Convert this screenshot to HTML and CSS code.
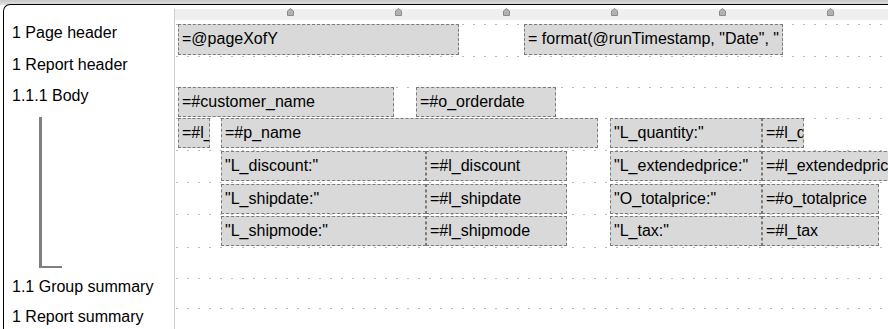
FILE: index.html
```html
<!DOCTYPE html>
<html>
<head>
<meta charset="utf-8">
<link rel="stylesheet" href="styles.css">
</head>
<body>
<div class="frame">
  <div class="gutter gutter-ruler"></div>
  <div class="ruler-cell">
    <div class="ruler">
      <svg class="marker" width="7" height="8" viewBox="0 0 7 8"><polygon points="3.5,0.5 6.5,3 6.5,7.5 0.5,7.5 0.5,3" /></svg>
      <svg class="marker" width="7" height="8" viewBox="0 0 7 8"><polygon points="3.5,0.5 6.5,3 6.5,7.5 0.5,7.5 0.5,3" /></svg>
      <svg class="marker" width="7" height="8" viewBox="0 0 7 8"><polygon points="3.5,0.5 6.5,3 6.5,7.5 0.5,7.5 0.5,3" /></svg>
      <svg class="marker" width="7" height="8" viewBox="0 0 7 8"><polygon points="3.5,0.5 6.5,3 6.5,7.5 0.5,7.5 0.5,3" /></svg>
      <svg class="marker" width="7" height="8" viewBox="0 0 7 8"><polygon points="3.5,0.5 6.5,3 6.5,7.5 0.5,7.5 0.5,3" /></svg>
      <svg class="marker" width="7" height="8" viewBox="0 0 7 8"><polygon points="3.5,0.5 6.5,3 6.5,7.5 0.5,7.5 0.5,3" /></svg>
    </div>
  </div>

  <div class="gutter label">1 Page header</div>
  <div class="band">
    <div class="field w-pagexofy ml-3">=@pageXofY</div>
    <div class="field w-format ml-65">= format(@runTimestamp, "Date", "</div>
  </div>

  <div class="gutter label">1 Report header</div>
  <div class="band"></div>

  <div class="gutter label body-label">
    <span>1.1.1 Body</span>
    <div class="bracket"></div>
  </div>
  <div class="band">
    <div class="field w-customer ml-3">=#customer_name</div>
    <div class="field w-orderdate ml-22">=#o_orderdate</div>
  </div>
  <div class="band">
    <div class="field w-l ml-3">=#l_</div>
    <div class="field w-pname ml-11">=#p_name</div>
    <div class="field w-lab2 ml-12">"L_quantity:"</div>
    <div class="field w-lq">=#l_q</div>
  </div>
  <div class="band off-1">
    <div class="field w-lab1 ml-46">"L_discount:"</div>
    <div class="field w-val1">=#l_discount</div>
    <div class="field w-lab2 ml-43">"L_extendedprice:"</div>
    <div class="field w-ext">=#l_extendedprice</div>
  </div>
  <div class="band off-2">
    <div class="field w-lab1 ml-46">"L_shipdate:"</div>
    <div class="field w-val1">=#l_shipdate</div>
    <div class="field w-lab2 ml-43">"O_totalprice:"</div>
    <div class="field w-val2">=#o_totalprice</div>
  </div>
  <div class="band off-2">
    <div class="field w-lab1 ml-46">"L_shipmode:"</div>
    <div class="field w-val1">=#l_shipmode</div>
    <div class="field w-lab2 ml-43">"L_tax:"</div>
    <div class="field w-val2">=#l_tax</div>
  </div>
  <div class="band"></div>

  <div class="gutter label">1.1 Group summary</div>
  <div class="band"></div>

  <div class="gutter label">1 Report summary</div>
  <div class="band"></div>
</div>
</body>
</html>
```

FILE: styles.css
```css
html {
  background: linear-gradient(#c9c9c9, #e2e2e2) 0 0 / 100% 5px no-repeat, #ffffff;
}
body {
  margin: 0;
  overflow: hidden;
  font-family: "Liberation Sans", Arial, sans-serif;
  font-size: 16px;
  color: #000;
}
.frame {
  margin: 4px 0 0 3px;
  border-top: 1px solid #000;
  border-left: 1px solid #000;
  border-top-left-radius: 7px;
  background: #fff;
  display: grid;
  grid-template-columns: 171px 1fr;
  grid-template-rows: 19px 32px 31px 31px 32px 32px 32px 33px 31px 30px 30px;
  height: 340px;
}
.gutter {
  border-right: 1px solid #cfcfcf;
}
.gutter-ruler {
  margin-top: 4px;
}
.label {
  padding-left: 8px;
  padding-top: 1px;
  line-height: 16px;
  white-space: nowrap;
}
.body-label {
  grid-row: span 6;
}
.body-label span {
  display: block;
}
.bracket {
  margin: 13px 0 0 27px;
  width: 20px;
  height: 149px;
  border-left: 3px solid #808080;
  border-bottom: 2px solid #808080;
}
.ruler-cell {
  padding-top: 3px;
}
.ruler {
  height: 11px;
  margin-top: 1px;
  background: #efefef;
  display: flex;
  gap: 101px;
  padding-left: 112px;
}
.marker {
  display: block;
  margin-top: -1px;
}
.marker polygon {
  fill: #b2b2b2;
  stroke: #8a8a8a;
  stroke-width: 1;
}
.band {
  display: flex;
  align-items: flex-start;
  overflow: hidden;
  background-image: linear-gradient(to right, #b9b9b9 0 2px, transparent 2px);
  background-size: 11px 1px;
  background-repeat: repeat-x;
  background-position: 1px 0;
}
.off-1 { padding-top: 1px; }
.off-2 { padding-top: 2px; }
.field {
  flex: none;
  box-sizing: border-box;
  height: 30px;
  line-height: 28px;
  padding-left: 3px;
  background: #d9d9d9;
  border: 1px dashed #7a7a7a;
  white-space: nowrap;
  overflow: hidden;
}
.ml-3 { margin-left: 3px; }
.ml-11 { margin-left: 11px; }
.ml-12 { margin-left: 12px; }
.ml-22 { margin-left: 22px; }
.ml-43 { margin-left: 43px; }
.ml-46 { margin-left: 46px; }
.ml-65 { margin-left: 65px; }
.w-pagexofy { width: 281px; height: 31px; }
.w-format { width: 259px; height: 31px; }
.w-customer { width: 216px; }
.w-orderdate { width: 140px; }
.w-l { width: 32px; }
.w-pname { width: 377px; }
.w-lab1 { width: 205px; }
.w-val1 { width: 141px; }
.w-lab2 { width: 152px; }
.w-lq { width: 42px; }
.w-ext { width: 140px; }
.w-val2 { width: 117px; }
```
